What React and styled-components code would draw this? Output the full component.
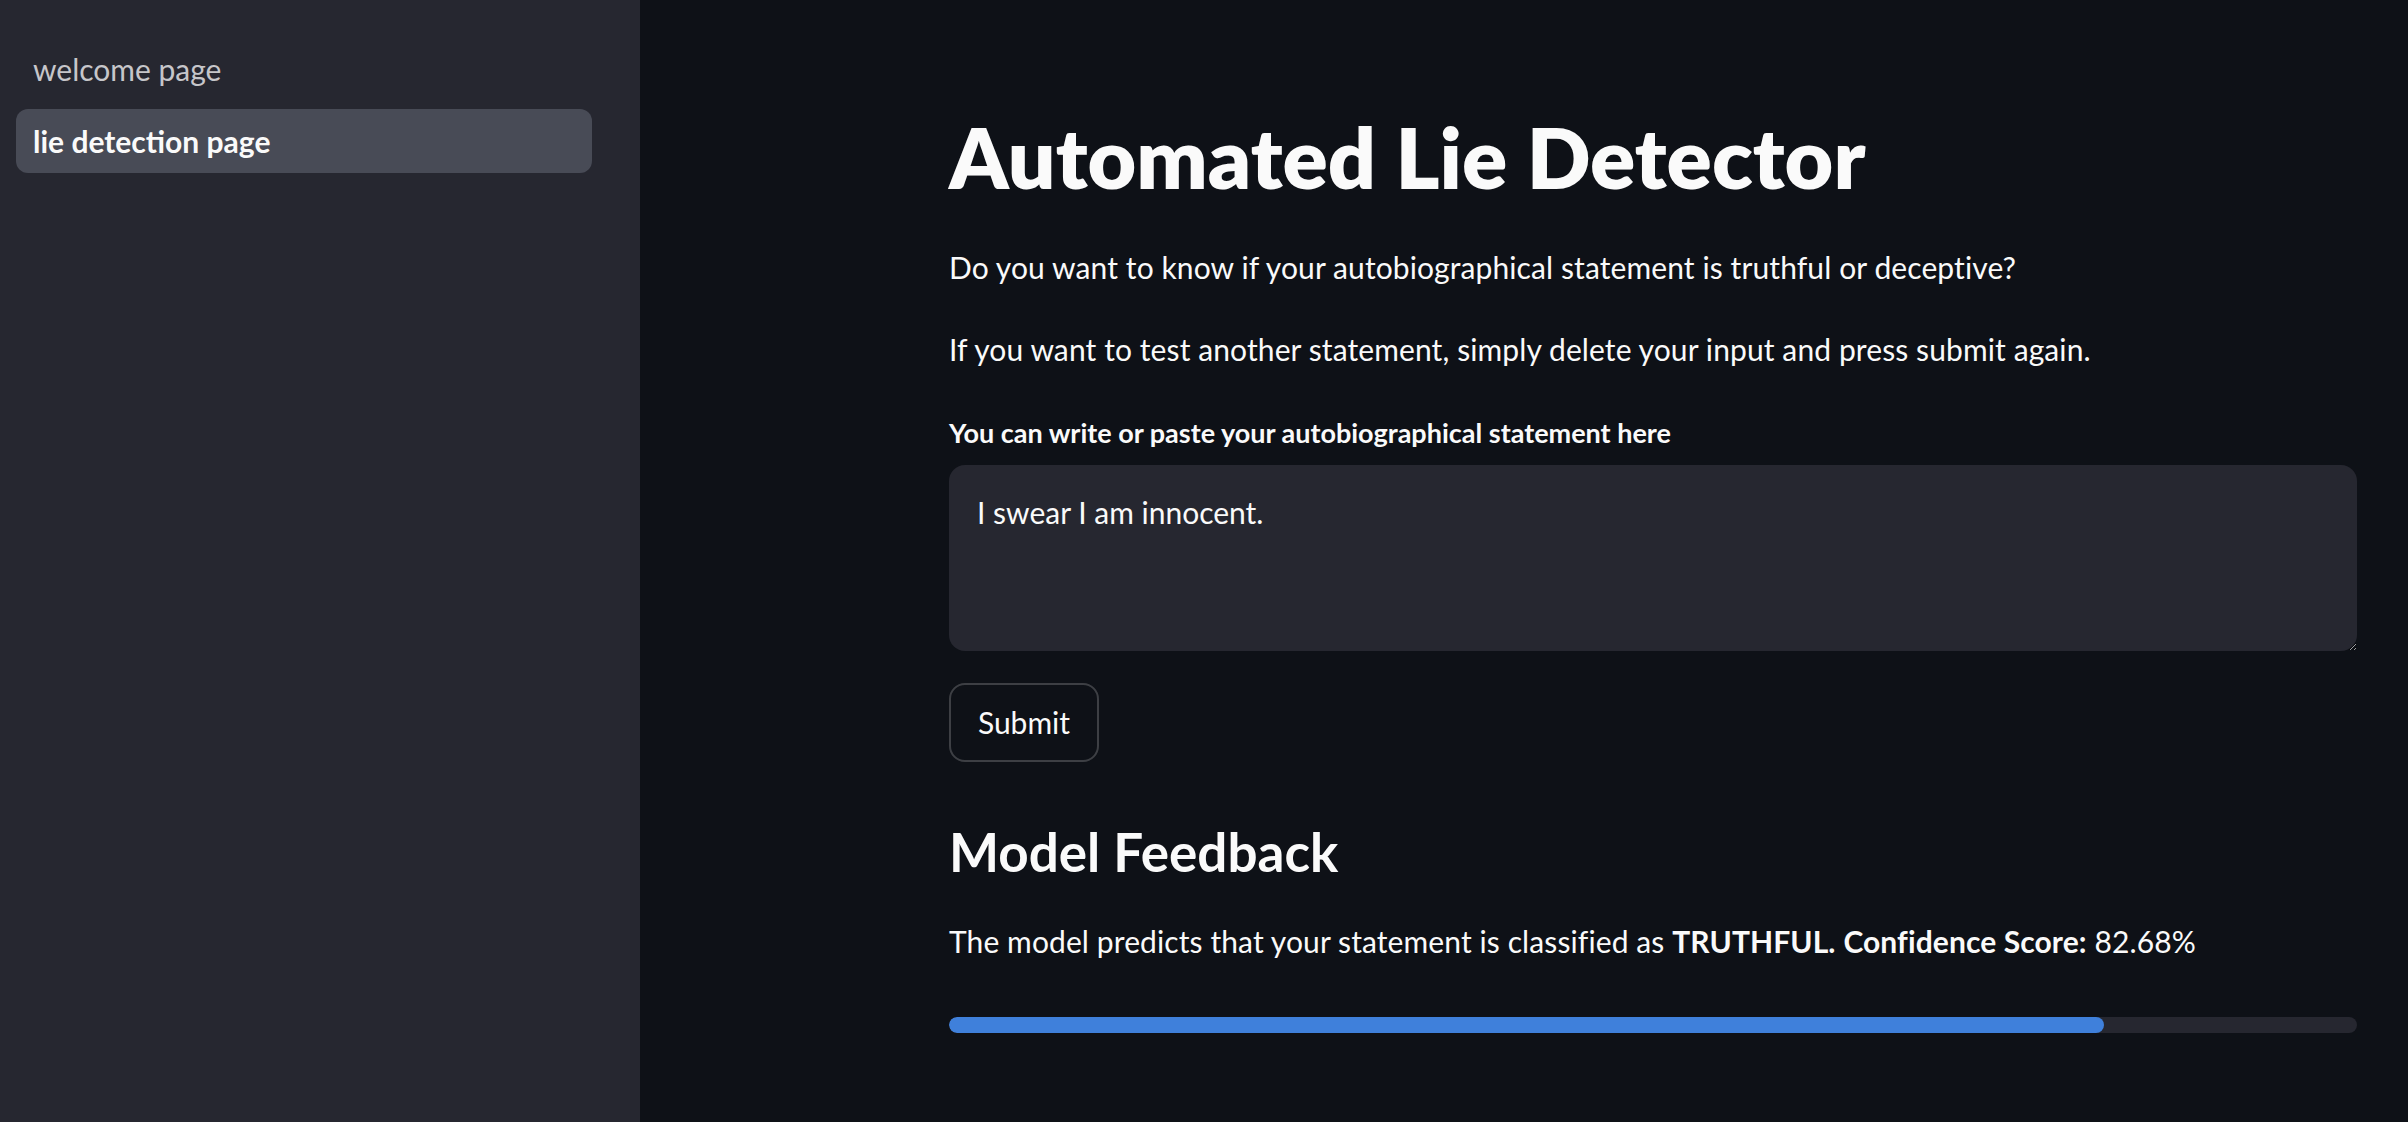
import React from "react";
import styled, { createGlobalStyle } from "styled-components";

const Global = createGlobalStyle`
  html, body { margin: 0; padding: 0; background: #0e1117; }
  body { font-family: Lato, "Noto Sans", sans-serif; color: #fafafa; }
  * { box-sizing: border-box; }
`;

const Shell = styled.div`
  display: flex;
  width: 2408px;
  height: 1122px;
  overflow: hidden;
`;

const Sidebar = styled.nav`
  width: 640px;
  flex: none;
  background: #262730;
  padding: 37px 48px 0 16px;
  display: flex;
  flex-direction: column;
  gap: 8px;
`;

const NavItem = styled.a`
  display: flex;
  align-items: center;
  height: 64px;
  padding: 0 17px;
  border-radius: 12px;
  font-size: 30px;
  text-decoration: none;
  color: ${(p) => (p.$active ? "#fafafa" : "#c6c6ca")};
  font-weight: ${(p) => (p.$active ? 700 : 400)};
  background: ${(p) => (p.$active ? "rgb(72,75,86)" : "transparent")};
`;

const Main = styled.main`
  flex: 1;
  background: #0e1117;
  padding: 107px 0 0 309px;
`;

const Content = styled.div`
  width: 1408px;
  display: flex;
  flex-direction: column;
`;

const Title = styled.h1`
  margin: 0;
  font-size: 84px;
  line-height: 1.2;
  font-weight: 800;
`;

const Para = styled.p`
  margin: ${(p) => p.$top}px 0 0;
  font-size: 30px;
  line-height: 45px;
  letter-spacing: 0.1px;
`;

const Label = styled.label`
  margin-top: 41px;
  font-size: 27px;
  line-height: 39px;
  font-weight: 700;
`;

const TextArea = styled.textarea`
  margin-top: 13px;
  height: 186px;
  width: 100%;
  background: #262730;
  border: none;
  border-radius: 16px;
  padding: 25px 28px;
  color: #fafafa;
  font-family: Lato, "Noto Sans", sans-serif;
  font-size: 30px;
  line-height: 45px;
  resize: vertical;
  color-scheme: dark;
  outline: none;
`;

const Button = styled.button`
  margin-top: 32px;
  align-self: flex-start;
  width: 150px;
  height: 79px;
  background: transparent;
  border: 2px solid rgba(250, 250, 250, 0.2);
  border-radius: 16px;
  color: #fafafa;
  font-family: Lato, "Noto Sans", sans-serif;
  font-size: 30px;
`;

const SubHead = styled.h3`
  margin: 58px 0 0;
  font-size: 53px;
  line-height: 1.2;
  font-weight: 700;
`;

const Track = styled.div`
  margin-top: 53px;
  height: 16px;
  border-radius: 8px;
  background: #262730;
  overflow: hidden;
`;

const Fill = styled.div`
  height: 100%;
  border-radius: 8px;
  background: #3f80db;
`;

export default function App() {
  const score = 82.68;
  return (
    <>
      <Global />
      <Shell>
        <Sidebar>
          <NavItem>welcome page</NavItem>
          <NavItem $active>lie detection page</NavItem>
        </Sidebar>
        <Main>
          <Content>
            <Title>Automated Lie Detector</Title>
            <Para $top={37}>
              Do you want to know if your autobiographical statement is truthful or deceptive?
            </Para>
            <Para $top={37}>
              If you want to test another statement, simply delete your input and press submit again.
            </Para>
            <Label>You can write or paste your autobiographical statement here</Label>
            <TextArea defaultValue="I swear I am innocent." />
            <Button>Submit</Button>
            <SubHead>Model Feedback</SubHead>
            <Para $top={36}>
              The model predicts that your statement is classified as <b>TRUTHFUL.</b>{" "}
              <b>Confidence Score:</b> {score}%
            </Para>
            <Track>
              <Fill style={{ width: `${Math.floor(score)}%` }} />
            </Track>
          </Content>
        </Main>
      </Shell>
    </>
  );
}
